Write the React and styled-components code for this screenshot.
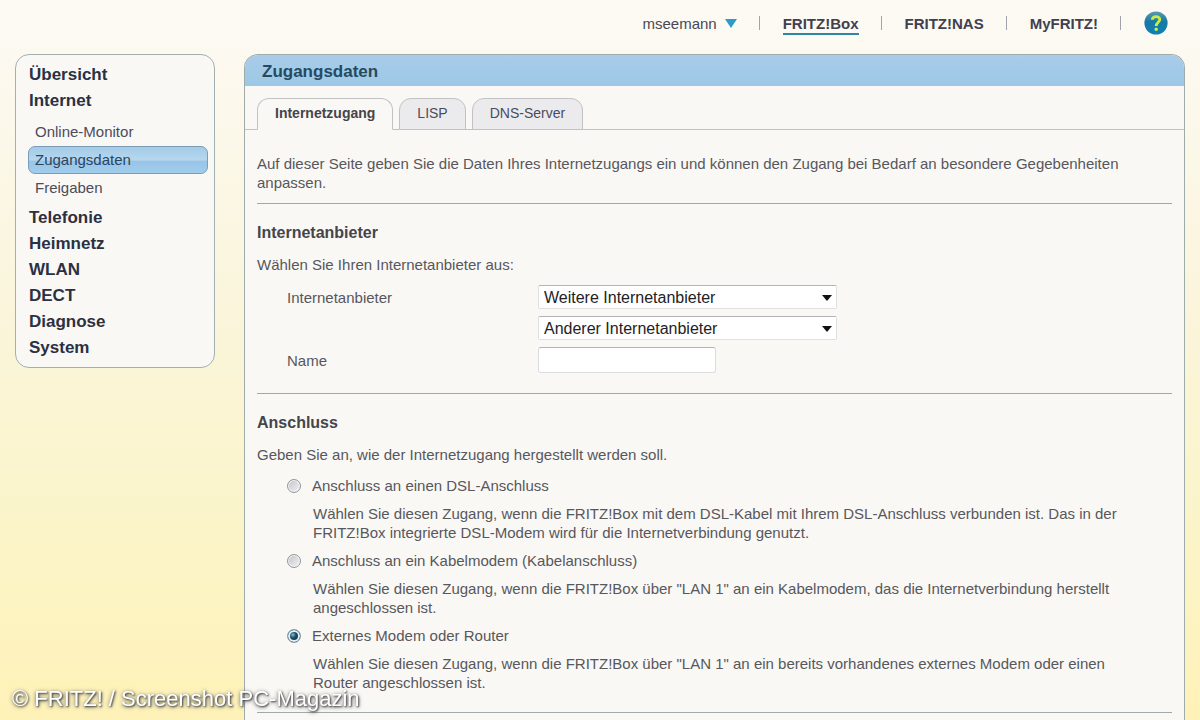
import React, { useState } from "react";
import styled, { createGlobalStyle } from "styled-components";

const GlobalStyle = createGlobalStyle`
  *, *::before, *::after { box-sizing: border-box; }
  body {
    margin: 0;
    color: #57575c;
    font: 15px/19px "Liberation Sans", Arial, sans-serif;
  }
  h1, h2, p, ul, fieldset { margin: 0; padding: 0; }
  ul { list-style: none; }
  a { color: inherit; text-decoration: none; }
  button, input, select { font: inherit; color: inherit; }
`;

const Page = styled.div`
  display: flex;
  flex-direction: column;
  height: 100vh;
  overflow: hidden;
  padding: 0 15px;
  background: linear-gradient(#fdfaf5 0%, #fcf8ec 14%, #faf5da 45%, #fbf4c8 75%, #fff2b8 100%);
`;

const TopBar = styled.nav`
  display: flex;
  flex: none;
  align-items: center;
  justify-content: flex-end;
  height: 54px;
  padding: 0 17px 8px 0;
`;

const TopItem = styled.div`
  display: flex;
  align-items: center;
  & + &::before {
    content: "";
    width: 1px;
    height: 14px;
    margin: 0 23px 0 22px;
    background: #a3a3ad;
  }
`;

const TopLink = styled.a`
  font-weight: bold;
  color: #40404f;
  padding-top: 2px;
  border-bottom: 2px solid ${(p) => (p.$active ? "#2d86a8" : "transparent")};
`;

const UserButton = styled.button`
  display: flex;
  align-items: center;
  gap: 8px;
  padding: 0;
  border: 0;
  background: none;
  color: #484855;
`;

const HelpButton = styled.button`
  display: flex;
  padding: 0;
  border: 0;
  background: none;
`;

const Columns = styled.div`
  display: grid;
  grid-template-columns: 200px 1fr;
  gap: 29px;
  flex: 1;
`;

const Sidebar = styled.nav`
  align-self: start;
  padding: 7px 6px 6px 13px;
  border: 1px solid #a3b0b0;
  border-radius: 14px;
  background: #faf8f5;
`;

const MenuLink = styled.a`
  display: block;
  font-size: 17px;
  line-height: 26px;
  font-weight: bold;
  color: #2b3042;
`;

const SubMenu = styled.ul`
  margin-left: -1px;
  padding: 4px 0 3px;
`;

const SubLink = styled.a`
  display: block;
  padding: 0 6px;
  border: 1px solid ${(p) => (p.$active ? "#7b9cb5" : "transparent")};
  border-radius: 7px;
  line-height: 26px;
  color: ${(p) => (p.$active ? "#2a4561" : "#4a4c5c")};
  background: ${(p) => (p.$active ? "linear-gradient(#a4cbe7 0%, #b6d7ee 50%, #97c5e8 55%, #a2cdec 100%)" : "none")};
`;

const Panel = styled.main`
  border: 1px solid #9dabab;
  border-bottom: 0;
  border-radius: 14px 14px 0 0;
  background: #faf8f5;
  overflow: hidden;
`;

const PanelTitle = styled.h1`
  padding: 2px 17px 0;
  font-size: 17px;
  line-height: 29px;
  color: #264a60;
  background: linear-gradient(#a9cce9, #9bc8e6);
`;

const TabBar = styled.div`
  display: flex;
  gap: 6px;
  margin-top: 12px;
  padding: 0 12px;
  box-shadow: inset 0 -1px #c2c2c4;
`;

const Tab = styled.button`
  height: 32px;
  padding: 0 17px 2px;
  border: 1px solid #c2c2c4;
  border-bottom-color: ${(p) => (p.$active ? "#faf8f5" : "#c2c2c4")};
  border-radius: 12px 12px 0 0;
  font-size: 14px;
  font-weight: ${(p) => (p.$active ? "bold" : "normal")};
  color: ${(p) => (p.$active ? "#45454a" : "#4a4c5c")};
  background: ${(p) => (p.$active ? "#faf8f5" : "#ebebee")};
`;

const Section = styled.section`
  margin: 0 12px;
  padding: 19px 0 20px;
  border-bottom: 1px solid #9dabab;
`;

const Intro = styled.p`
  margin: 0 12px;
  padding: 24px 0 11px;
  border-bottom: 1px solid #9dabab;
`;

const Heading = styled.h2`
  margin-bottom: 13px;
  font-size: 16px;
  line-height: 19px;
  color: #45454a;
`;

const Fields = styled.div`
  display: grid;
  grid-template-columns: 251px 1fr;
  align-items: center;
  gap: 7px 0;
  margin-top: 11px;
  padding-left: 30px;
`;

const SelectBox = styled.div`
  position: relative;
  grid-column: 2;
  width: 299px;
  svg {
    position: absolute;
    top: 10px;
    right: 5px;
    pointer-events: none;
  }
`;

const Select = styled.select`
  display: block;
  width: 100%;
  height: 24px;
  padding: 0 20px 0 5px;
  appearance: none;
  border: 1px solid #e0dfe2;
  border-top-color: #b4b4b8;
  border-radius: 2px;
  font-size: 16px;
  color: #222226;
  background: #fff;
`;

const TextInput = styled.input`
  width: 178px;
  height: 26px;
  border: 1px solid #dddce0;
  border-top-color: #b4b4b8;
  border-radius: 3px;
  background: #fff;
`;

const Options = styled.fieldset`
  display: grid;
  gap: 9px;
  margin-top: 12px;
  padding-left: 30px;
  border: 0;
`;

const OptionLabel = styled.label`
  display: flex;
  align-items: center;
  gap: 11px;
`;

const Radio = styled.input`
  appearance: none;
  width: 14px;
  height: 14px;
  margin: 0;
  border: 1px solid #96969a;
  border-radius: 50%;
  box-shadow: inset 0 0 0 1px #f4f4f6;
  background: linear-gradient(135deg, #bfc2c8, #f4f4f6);
  &:checked {
    border-color: #7e9cab;
    box-shadow: inset 0 0 0 2px #e6eff4;
    background: radial-gradient(circle at 40% 40%, #7fc3d8 0, #1d4c66 30%, #12384f 60%);
  }
`;

const OptionText = styled.p`
  padding: 0 20px 0 26px;
`;

const Watermark = styled.div`
  position: fixed;
  left: 12px;
  bottom: 8px;
  font-size: 22px;
  line-height: 26px;
  color: #fff;
  text-shadow: 1px 1px 2px #444, 0 1px 4px #555;
`;

const Arrow = ({ width, height, color }) => (
  <svg width={width} height={height} viewBox="0 0 12 8" preserveAspectRatio="none" aria-hidden="true">
    <path d="M0 0h12L6 8z" fill={color} />
  </svg>
);

const HelpIcon = () => (
  <svg width="24" height="24" viewBox="0 0 24 24" aria-hidden="true">
    <defs>
      <linearGradient id="help" x1="0" y1="0" x2="0" y2="1">
        <stop offset="0" stopColor="#5c9cab" />
        <stop offset=".45" stopColor="#1878a4" />
        <stop offset="1" stopColor="#0c82b5" />
      </linearGradient>
    </defs>
    <circle cx="12" cy="12" r="11.6" fill="url(#help)" />
    <path
      d="M8.3 8.8C8.5 4.5 15.8 4.5 15.8 8.6C15.8 11.2 12.2 11.6 12.2 15"
      fill="none"
      stroke="#c9ed48"
      strokeWidth="2.8"
    />
    <circle cx="12.2" cy="18.3" r="1.7" fill="#c9ed48" />
  </svg>
);

const before = ["Übersicht", "Internet"];
const pages = ["Online-Monitor", "Zugangsdaten", "Freigaben"];
const after = ["Telefonie", "Heimnetz", "WLAN", "DECT", "Diagnose", "System"];
const services = ["FRITZ!Box", "FRITZ!NAS", "MyFRITZ!"];
const tabs = ["Internetzugang", "LISP", "DNS-Server"];
const connections = [
  {
    id: "dsl",
    label: "Anschluss an einen DSL-Anschluss",
    text: "Wählen Sie diesen Zugang, wenn die FRITZ!Box mit dem DSL-Kabel mit Ihrem DSL-Anschluss verbunden ist. Das in der FRITZ!Box integrierte DSL-Modem wird für die Internetverbindung genutzt.",
  },
  {
    id: "kabel",
    label: "Anschluss an ein Kabelmodem (Kabelanschluss)",
    text: 'Wählen Sie diesen Zugang, wenn die FRITZ!Box über "LAN 1" an ein Kabelmodem, das die Internetverbindung herstellt angeschlossen ist.',
  },
  {
    id: "extern",
    label: "Externes Modem oder Router",
    text: 'Wählen Sie diesen Zugang, wenn die FRITZ!Box über "LAN 1" an ein bereits vorhandenes externes Modem oder einen Router angeschlossen ist.',
  },
];

export default function App() {
  const [tab, setTab] = useState(tabs[0]);
  const [connection, setConnection] = useState("extern");

  return (
    <Page>
      <GlobalStyle />
      <TopBar>
        <TopItem>
          <UserButton type="button">
            mseemann
            <Arrow width={12} height={9} color="#2d9cc8" />
          </UserButton>
        </TopItem>
        {services.map((name, i) => (
          <TopItem key={name}>
            <TopLink href="#" $active={i === 0}>{name}</TopLink>
          </TopItem>
        ))}
        <TopItem>
          <HelpButton type="button" aria-label="Hilfe">
            <HelpIcon />
          </HelpButton>
        </TopItem>
      </TopBar>

      <Columns>
        <Sidebar>
          {before.map((name) => <MenuLink href="#" key={name}>{name}</MenuLink>)}
          <SubMenu>
            {pages.map((name) => (
              <li key={name}>
                <SubLink href="#" $active={name === "Zugangsdaten"}>{name}</SubLink>
              </li>
            ))}
          </SubMenu>
          {after.map((name) => <MenuLink href="#" key={name}>{name}</MenuLink>)}
        </Sidebar>

        <Panel>
          <PanelTitle>Zugangsdaten</PanelTitle>
          <TabBar role="tablist">
            {tabs.map((name) => (
              <Tab
                key={name}
                type="button"
                role="tab"
                aria-selected={name === tab}
                $active={name === tab}
                onClick={() => setTab(name)}
              >
                {name}
              </Tab>
            ))}
          </TabBar>

          <Intro>
            Auf dieser Seite geben Sie die Daten Ihres Internetzugangs ein und können den Zugang bei
            Bedarf an besondere Gegebenheiten anpassen.
          </Intro>

          <Section>
            <Heading>Internetanbieter</Heading>
            <p>Wählen Sie Ihren Internetanbieter aus:</p>
            <Fields>
              <label htmlFor="provider">Internetanbieter</label>
              <SelectBox>
                <Select id="provider">
                  <option>Weitere Internetanbieter</option>
                </Select>
                <Arrow width={10} height={6} color="#111" />
              </SelectBox>
              <SelectBox>
                <Select aria-label="Anderer Internetanbieter">
                  <option>Anderer Internetanbieter</option>
                </Select>
                <Arrow width={10} height={6} color="#111" />
              </SelectBox>
              <label htmlFor="name">Name</label>
              <TextInput id="name" type="text" />
            </Fields>
          </Section>

          <Section>
            <Heading>Anschluss</Heading>
            <p>Geben Sie an, wie der Internetzugang hergestellt werden soll.</p>
            <Options aria-label="Anschluss">
              {connections.map(({ id, label, text }) => (
                <React.Fragment key={id}>
                  <OptionLabel>
                    <Radio
                      type="radio"
                      name="connection"
                      checked={connection === id}
                      onChange={() => setConnection(id)}
                    />
                    {label}
                  </OptionLabel>
                  <OptionText>{text}</OptionText>
                </React.Fragment>
              ))}
            </Options>
          </Section>
        </Panel>
      </Columns>
      <Watermark>© FRITZ! / Screenshot PC-Magazin</Watermark>
    </Page>
  );
}
